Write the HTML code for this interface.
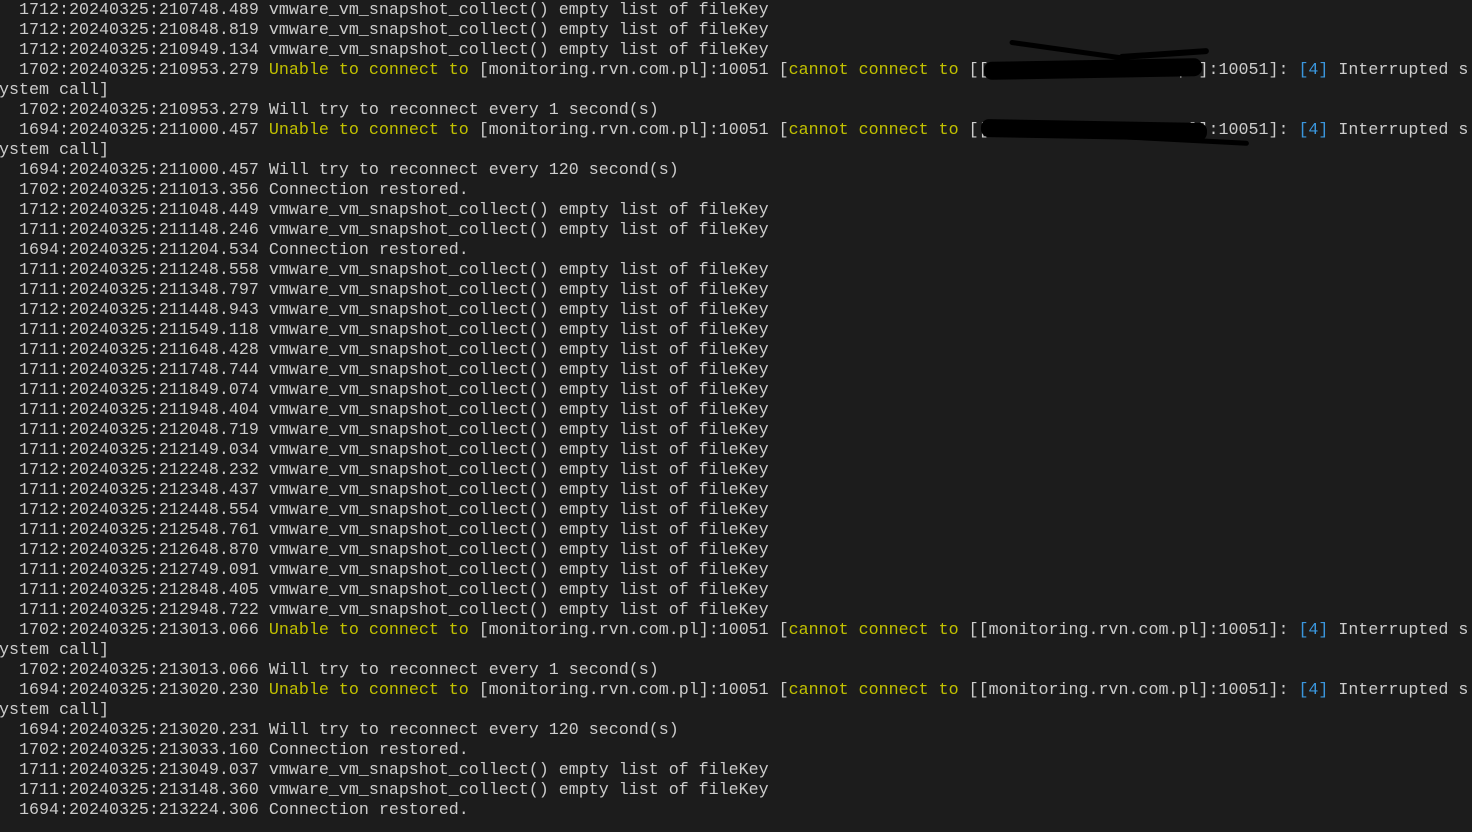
<!DOCTYPE html>
<html><head><meta charset="utf-8"><style>
html,body{margin:0;padding:0;background:#1c1c1c;width:1472px;height:832px;overflow:hidden;}
pre{margin:0;padding:1px 0 0 0;margin-left:-1px;font-family:"Liberation Mono",monospace;font-size:16.67px;line-height:20px;color:#cccccc;white-space:pre;position:relative;}
.y{color:#c1c100}.b{color:#3a96dd}
.s{position:absolute;background:#000;border-radius:8px;}
</style></head><body>
<pre>  1712:20240325:210748.489 vmware_vm_snapshot_collect() empty list of fileKey
  1712:20240325:210848.819 vmware_vm_snapshot_collect() empty list of fileKey
  1712:20240325:210949.134 vmware_vm_snapshot_collect() empty list of fileKey
  1702:20240325:210953.279 <span class="y">Unable to connect to</span> [monitoring.rvn.com.pl]:10051 [<span class="y">cannot connect to</span> [[monitoring.rvn.com.pl]:10051]: <span class="b">[4]</span> Interrupted s
ystem call]
  1702:20240325:210953.279 Will try to reconnect every 1 second(s)
  1694:20240325:211000.457 <span class="y">Unable to connect to</span> [monitoring.rvn.com.pl]:10051 [<span class="y">cannot connect to</span> [[monitoring.rvn.com.pl]:10051]: <span class="b">[4]</span> Interrupted s
ystem call]
  1694:20240325:211000.457 Will try to reconnect every 120 second(s)
  1702:20240325:211013.356 Connection restored.
  1712:20240325:211048.449 vmware_vm_snapshot_collect() empty list of fileKey
  1711:20240325:211148.246 vmware_vm_snapshot_collect() empty list of fileKey
  1694:20240325:211204.534 Connection restored.
  1711:20240325:211248.558 vmware_vm_snapshot_collect() empty list of fileKey
  1711:20240325:211348.797 vmware_vm_snapshot_collect() empty list of fileKey
  1712:20240325:211448.943 vmware_vm_snapshot_collect() empty list of fileKey
  1711:20240325:211549.118 vmware_vm_snapshot_collect() empty list of fileKey
  1711:20240325:211648.428 vmware_vm_snapshot_collect() empty list of fileKey
  1711:20240325:211748.744 vmware_vm_snapshot_collect() empty list of fileKey
  1711:20240325:211849.074 vmware_vm_snapshot_collect() empty list of fileKey
  1711:20240325:211948.404 vmware_vm_snapshot_collect() empty list of fileKey
  1711:20240325:212048.719 vmware_vm_snapshot_collect() empty list of fileKey
  1711:20240325:212149.034 vmware_vm_snapshot_collect() empty list of fileKey
  1712:20240325:212248.232 vmware_vm_snapshot_collect() empty list of fileKey
  1711:20240325:212348.437 vmware_vm_snapshot_collect() empty list of fileKey
  1712:20240325:212448.554 vmware_vm_snapshot_collect() empty list of fileKey
  1711:20240325:212548.761 vmware_vm_snapshot_collect() empty list of fileKey
  1712:20240325:212648.870 vmware_vm_snapshot_collect() empty list of fileKey
  1711:20240325:212749.091 vmware_vm_snapshot_collect() empty list of fileKey
  1711:20240325:212848.405 vmware_vm_snapshot_collect() empty list of fileKey
  1711:20240325:212948.722 vmware_vm_snapshot_collect() empty list of fileKey
  1702:20240325:213013.066 <span class="y">Unable to connect to</span> [monitoring.rvn.com.pl]:10051 [<span class="y">cannot connect to</span> [[monitoring.rvn.com.pl]:10051]: <span class="b">[4]</span> Interrupted s
ystem call]
  1702:20240325:213013.066 Will try to reconnect every 1 second(s)
  1694:20240325:213020.230 <span class="y">Unable to connect to</span> [monitoring.rvn.com.pl]:10051 [<span class="y">cannot connect to</span> [[monitoring.rvn.com.pl]:10051]: <span class="b">[4]</span> Interrupted s
ystem call]
  1694:20240325:213020.231 Will try to reconnect every 120 second(s)
  1702:20240325:213033.160 Connection restored.
  1711:20240325:213049.037 vmware_vm_snapshot_collect() empty list of fileKey
  1711:20240325:213148.360 vmware_vm_snapshot_collect() empty list of fileKey
  1694:20240325:213224.306 Connection restored.
<div class="s" style="left:985px;top:60px;width:218px;height:18px;transform:rotate(-1deg)"></div><div class="s" style="left:1010px;top:48px;width:120px;height:5px;transform:rotate(8deg)"></div><div class="s" style="left:1120px;top:51px;width:90px;height:6px;transform:rotate(-4deg)"></div><div class="s" style="left:982px;top:121px;width:226px;height:18px;transform:rotate(1deg)"></div><div class="s" style="left:1100px;top:137px;width:150px;height:5px;transform:rotate(3deg)"></div></pre>
</body></html>
